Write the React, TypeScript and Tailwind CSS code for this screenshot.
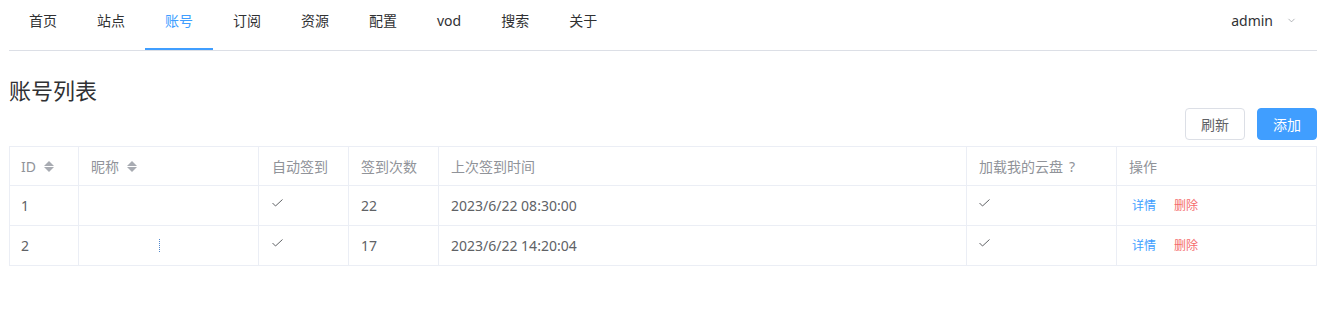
import { ChevronDown } from 'lucide-react';

const navItems = ['首页', '站点', '账号', '订阅', '资源', '配置', 'vod', '搜索', '关于'];

const accounts = [
  { id: 1, nick: '', auto: true, count: 22, last: '2023/6/22 08:30:00', mount: true },
  { id: 2, nick: 'dots', auto: true, count: 17, last: '2023/6/22 14:20:04', mount: true }
];

const cols = 'grid grid-cols-[69px_180px_90px_90px_528px_150px_200px]';

function SortCaret() {
  return (
    <svg width="10" height="11" viewBox="0 0 10 11" className="ml-[8px] inline-block">
      <polygon points="5,0 10,5 0,5" fill="#a8abb2" />
      <polygon points="0,6 10,6 5,11" fill="#a8abb2" />
    </svg>
  );
}

function Check() {
  return (
    <svg width="11" height="8" viewBox="0 0 11 8" className="mb-[6px]">
      <polyline points="0.5,4 3.5,7 10.5,0.5" fill="none" stroke="#606266" strokeWidth="1" />
    </svg>
  );
}

export default function App() {
  return (
    <div className="min-h-[334px] bg-white pl-[9px] pr-[10px] font-['Noto_Sans','Noto_Sans_CJK_SC',sans-serif] text-[14px]">
      <div className="flex h-[51px] items-start border-b border-[#dcdfe6]">
        {navItems.map((item) => (
          <div
            key={item}
            className={
              item === '账号'
                ? 'h-[50px] border-b-2 border-[#409eff] px-[20px] leading-[41px] text-[#409eff]'
                : 'h-[50px] border-b-2 border-transparent px-[20px] leading-[41px] text-[#303133]'
            }
          >
            {item}
          </div>
        ))}
        <div className="ml-auto flex h-[41px] items-center gap-[13px] pr-[20px] text-[#303133]">
          <span>admin</span>
          <ChevronDown size={11} strokeWidth={1.5} className="text-[#909399]" />
        </div>
      </div>

      <h2 className="mt-[23px] text-[22px] leading-[33px] font-normal text-[#303133]">账号列表</h2>

      <div className="mt-px flex justify-end gap-[12px]">
        <button className="h-[32px] w-[60px] rounded-[4px] border border-[#dcdfe6] bg-white text-[14px] text-[#606266]">
          刷新
        </button>
        <button className="h-[32px] w-[60px] rounded-[4px] border border-[#409eff] bg-[#409eff] text-[14px] text-white">
          添加
        </button>
      </div>

      <div className="mt-[6px] border-l border-t border-[#ebeef5]">
        <div className={`${cols} h-[39px] text-[#909399]`}>
          <div className="flex items-center border-b border-r border-[#ebeef5] pl-[11px]">
            ID
            <SortCaret />
          </div>
          <div className="flex items-center border-b border-r border-[#ebeef5] pl-[12px]">
            昵称
            <SortCaret />
          </div>
          <div className="flex items-center border-b border-r border-[#ebeef5] pl-[13px]">自动签到</div>
          <div className="flex items-center border-b border-r border-[#ebeef5] pl-[12px]">签到次数</div>
          <div className="flex items-center border-b border-r border-[#ebeef5] pl-[12px]">上次签到时间</div>
          <div className="flex items-center border-b border-r border-[#ebeef5] pl-[12px]">
            加载我的云盘<span className="ml-[6px]">?</span>
          </div>
          <div className="flex items-center border-b border-r border-[#ebeef5] pl-[12px]">操作</div>
        </div>
        {accounts.map((a) => (
          <div key={a.id} className={`${cols} h-[40px] text-[#606266]`}>
            <div className="flex items-center border-b border-r border-[#ebeef5] pl-[11px]">{a.id}</div>
            <div className="flex items-center border-b border-r border-[#ebeef5] pl-[12px]">
              {a.nick === 'dots' && <span className="ml-[68px] h-[13px] border-l border-dotted border-[#4f86cc]" />}
            </div>
            <div className="flex items-center border-b border-r border-[#ebeef5] pl-[13px]">{a.auto && <Check />}</div>
            <div className="flex items-center border-b border-r border-[#ebeef5] pl-[12px]">{a.count}</div>
            <div className="flex items-center border-b border-r border-[#ebeef5] pl-[12px]">{a.last}</div>
            <div className="flex items-center border-b border-r border-[#ebeef5] pl-[12px]">{a.mount && <Check />}</div>
            <div className="flex items-center gap-[18px] border-b border-r border-[#ebeef5] pl-[15px] pt-px text-[12px]">
              <span className="text-[#409eff]">详情</span>
              <span className="text-[#f56c6c]">删除</span>
            </div>
          </div>
        ))}
      </div>
    </div>
  );
}
